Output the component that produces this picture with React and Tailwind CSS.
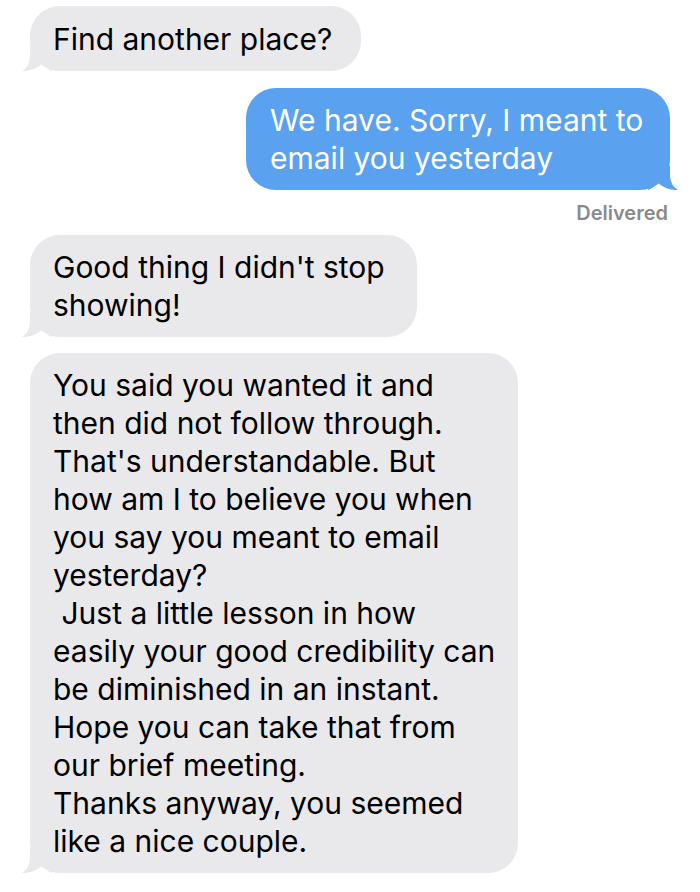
import React from "react";

function Tail({ color, side }) {
  const cls =
    side === "left"
      ? "absolute left-[-8px] bottom-0 w-[30px] h-[24px]"
      : "absolute right-[-8px] bottom-0 w-[30px] h-[24px] -scale-x-100";
  return (
    <svg className={cls} viewBox="0 0 30 24" fill={color}>
      <path d="M8 0 L8 8 C8 16 5 21 0 24 C7 24.5 14 22 20 17 C23 20 27 23 30 24 L30 0 Z" />
    </svg>
  );
}

function Gray({ w, lines, className = "" }) {
  return (
    <div
      className={`relative ml-[30px] rounded-[30px] bg-[#e9e9eb] pl-[23px] py-[13px] text-black ${className}`}
      style={{ width: w }}
    >
      <Tail color="#e9e9eb" side="left" />
      <div className="relative whitespace-nowrap">
        {lines.map((l, i) => (
          <div key={i}>{l}</div>
        ))}
      </div>
    </div>
  );
}

export default function App() {
  return (
    <div
      className="w-[700px] h-[892px] overflow-hidden bg-white flex flex-col text-[30px] leading-[38px]"
      style={{ fontFamily: "Inter, 'Noto Sans', sans-serif" }}
    >
      <div className="pt-[6px]">
        <Gray w={331} lines={["Find another place?"]} className="pt-[14px] pb-[13px]" />
      </div>
      <div className="self-end mr-[30px] mt-[17px] relative w-[424px] rounded-[30px] bg-[#5aa1f0] pl-[24px] py-[13px] text-white">
        <Tail color="#5aa1f0" side="right" />
        <div className="relative whitespace-nowrap">
          <div>We have. Sorry, I meant to</div>
          <div>email you yesterday</div>
        </div>
      </div>
      <div className="self-end mr-[32px] mt-[13px] text-[20px] leading-[20px] font-semibold text-[#8a8a8e]">
        Delivered
      </div>
      <div className="mt-[12px]">
        <Gray w={387} lines={["Good thing I didn't stop", "showing!"]} />
      </div>
      <div className="mt-[16px]">
        <Gray
          w={488}
          lines={[
            "You said you wanted it and",
            "then did not follow through.",
            "That's understandable. But",
            "how am I to believe you when",
            "you say you meant to email",
            "yesterday?",
            "\u00a0Just a little lesson in how",
            "easily your good credibility can",
            "be diminished in an instant.",
            "Hope you can take that from",
            "our brief meeting.",
            "Thanks anyway, you seemed",
            "like a nice couple.",
          ]}
        />
      </div>
    </div>
  );
}
